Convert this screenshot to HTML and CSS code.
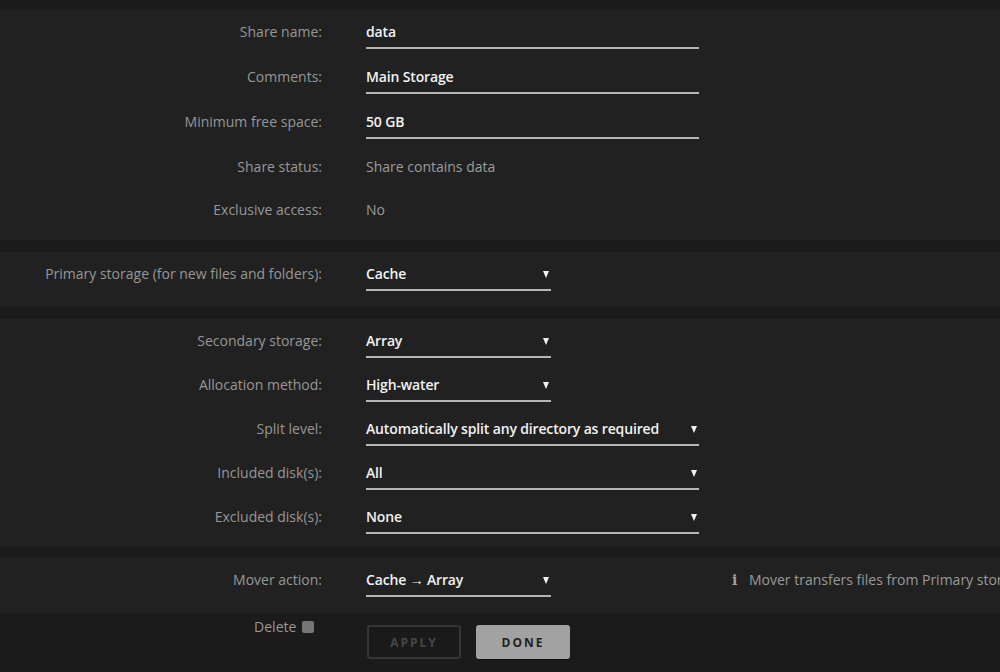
FILE: index.html
```html
<!DOCTYPE html>
<html lang="en">
<head>
    <meta charset="UTF-8">
    <meta name="viewport" content="width=device-width, initial-scale=1.0">
    <title>Share Settings</title>
    <link rel="stylesheet" href="styles.css">
</head>
<body>
    <div class="page">
        <div class="section section-top">
            <div class="form">
                <div class="row">
                    <div class="label">Share name:</div>
                    <div class="field input">data</div>
                </div>
                <div class="row">
                    <div class="label">Comments:</div>
                    <div class="field input">Main Storage</div>
                </div>
                <div class="row">
                    <div class="label">Minimum free space:</div>
                    <div class="field input">50 GB</div>
                </div>
                <div class="row">
                    <div class="label">Share status:</div>
                    <div class="field plain">Share contains data</div>
                </div>
                <div class="row">
                    <div class="label">Exclusive access:</div>
                    <div class="field plain">No</div>
                </div>
            </div>
            <div class="aside">Read settings from</div>
        </div>

        <div class="section">
            <div class="row">
                <div class="label">Primary storage (for new files and folders):</div>
                <div class="field select short">Cache <span class="arrow"></span></div>
            </div>
        </div>

        <div class="section section-tight">
            <div class="row">
                <div class="label">Secondary storage:</div>
                <div class="field select short">Array <span class="arrow"></span></div>
            </div>
            <div class="row">
                <div class="label">Allocation method:</div>
                <div class="field select short">High-water <span class="arrow"></span></div>
            </div>
            <div class="row">
                <div class="label">Split level:</div>
                <div class="field select">Automatically split any directory as required <span class="arrow"></span></div>
            </div>
            <div class="row">
                <div class="label">Included disk(s):</div>
                <div class="field select">All <span class="arrow"></span></div>
            </div>
            <div class="row">
                <div class="label">Excluded disk(s):</div>
                <div class="field select">None <span class="arrow"></span></div>
            </div>
        </div>

        <div class="section section-last">
            <div class="row">
                <div class="label">Mover action:</div>
                <div class="field select short">Cache &rarr; Array <span class="arrow"></span></div>
                <div class="info"><span class="info-icon">i</span>Mover transfers files from Primary storage to Secondary storage</div>
            </div>
        </div>

        <div class="actions">
            <div class="label delete">Delete <span class="checkbox"></span></div>
            <div class="buttons">
                <button class="btn btn-apply">APPLY</button>
                <button class="btn btn-done">DONE</button>
            </div>
        </div>
    </div>
</body>
</html>
```

FILE: styles.css
```css
* {
    margin: 0;
    padding: 0;
    box-sizing: border-box;
}

body {
    font-family: "Open Sans", "Liberation Sans", sans-serif;
    font-size: 14px;
    background: #1b1b1b;
    color: #999;
    overflow: hidden;
}

.page {
    padding-top: 10px;
    height: 100vh;
    white-space: nowrap;
}

.section {
    background: #212121;
    padding: 8px 0 16px;
    margin-bottom: 12px;
    display: flex;
    flex-direction: column;
    gap: 14px;
}

.section-top {
    flex-direction: row;
    padding-bottom: 15px;
    overflow: hidden;
}

.section-top .form {
    display: flex;
    flex-direction: column;
    gap: 14px;
    width: 699px;
    flex-shrink: 0;
}

.section-tight {
    gap: 13px;
    padding-bottom: 12px;
}

.section-last {
    margin-bottom: 0;
    overflow: hidden;
}

.aside {
    margin-left: 295px;
    padding-top: 38px;
    font-size: 11px;
    color: #888;
}

.row {
    display: flex;
    align-items: flex-start;
}

.label {
    width: 322px;
    flex-shrink: 0;
    text-align: right;
    color: #979797;
    line-height: 18px;
    padding-top: 5px;
    margin-right: 44px;
}

.field {
    flex-shrink: 0;
    line-height: 18px;
    padding: 5px 0 6px;
}

.input,
.select {
    color: #f2f2f2;
    font-weight: 600;
    letter-spacing: -0.15px;
    border-bottom: 2px solid #b5b5b5;
}

.input {
    width: 333px;
}

.plain {
    color: #9c9c9c;
}

.select {
    width: 333px;
    position: relative;
    padding-right: 20px;
}

.select.short {
    width: 185px;
}

.arrow {
    position: absolute;
    right: 2px;
    top: 11px;
    width: 0;
    height: 0;
    border-left: 3.5px solid transparent;
    border-right: 3.5px solid transparent;
    border-top: 7px solid #f2f2f2;
}

.info {
    margin-left: 181px;
    padding-top: 5px;
    line-height: 18px;
    color: #9a9a9a;
}

.info-icon {
    display: inline-block;
    width: 17px;
    font-family: "DejaVu Serif", serif;
    font-weight: bold;
    font-size: 14px;
    color: #a0a0a0;
}

.actions {
    display: flex;
    align-items: flex-start;
}

.delete {
    padding-right: 8px;
    margin-right: 45px;
}

.checkbox {
    display: inline-block;
    width: 12px;
    height: 12px;
    background: #767676;
    border-radius: 2px;
    vertical-align: -1px;
    margin-left: 2px;
}

.buttons {
    display: flex;
    gap: 15px;
    padding-top: 12px;
}

.btn {
    width: 94px;
    height: 34px;
    font-family: "Open Sans", "Liberation Sans", sans-serif;
    font-size: 12px;
    font-weight: 700;
    letter-spacing: 2px;
    border-radius: 3px;
    cursor: pointer;
}

.btn-apply {
    background: #1a1a1a;
    border: 2px solid #363636;
    color: #474747;
}

.btn-done {
    background: #a2a2a2;
    border: none;
    color: #222;
    box-shadow: 0 1px 0 #111;
}
```
